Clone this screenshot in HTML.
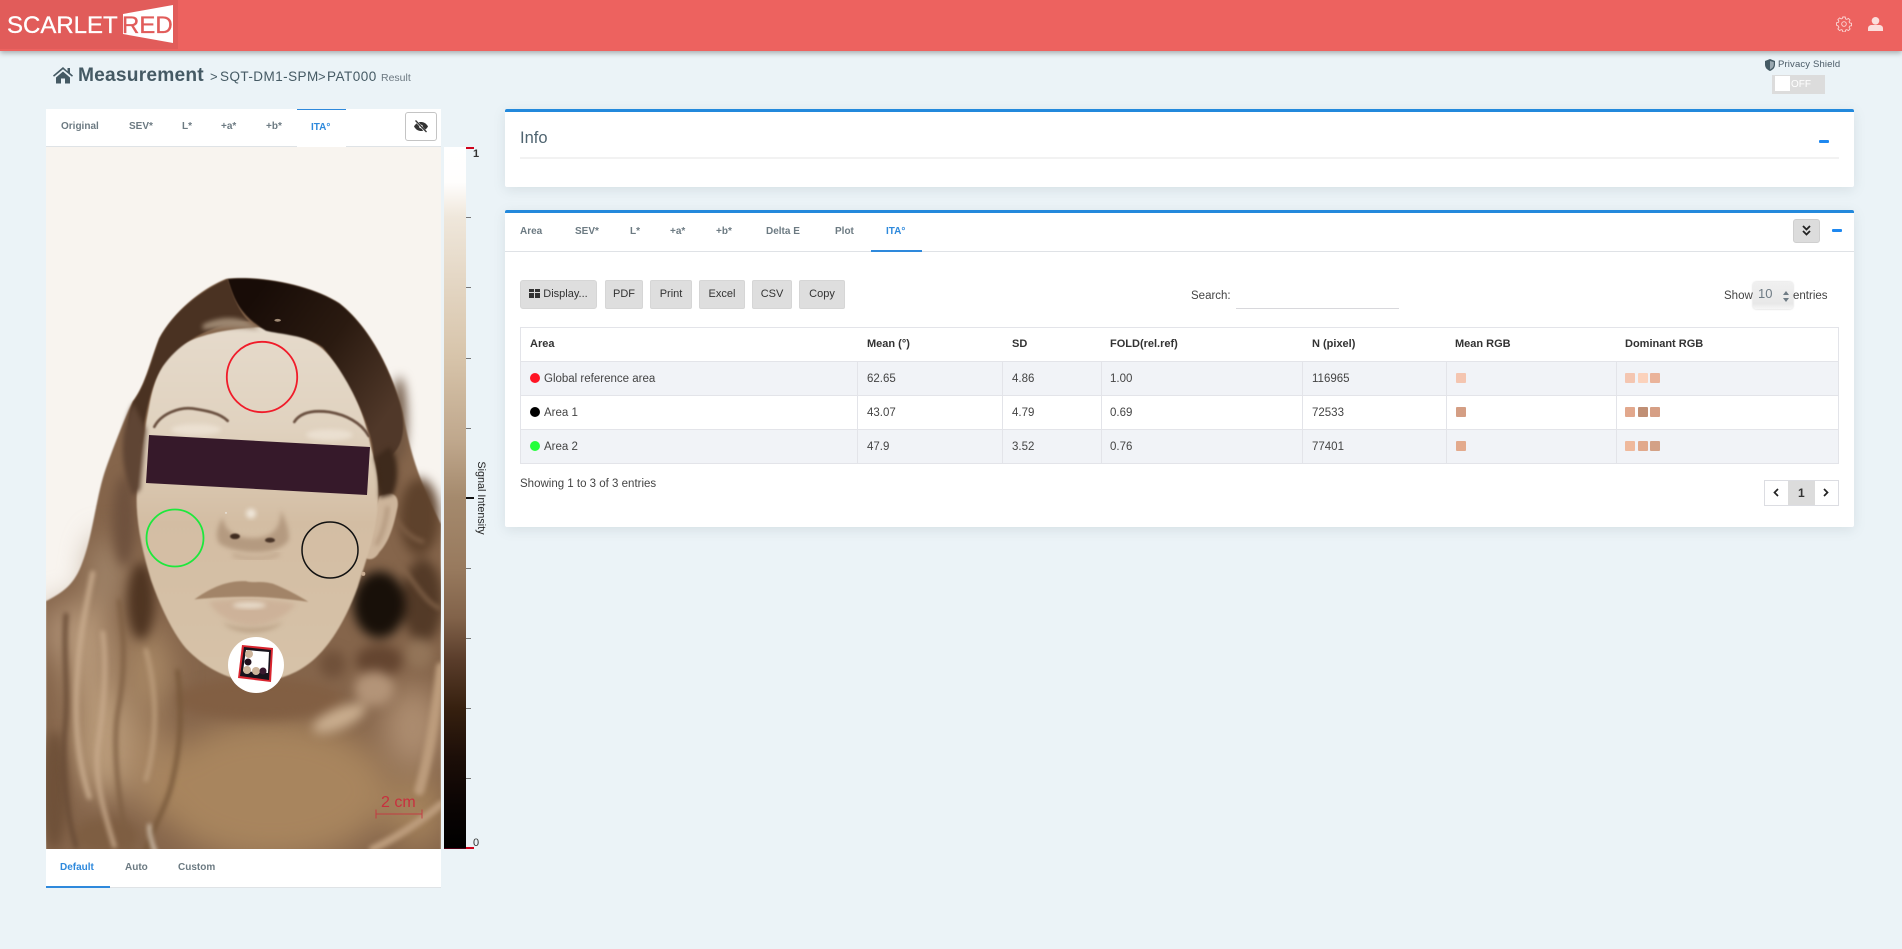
<!DOCTYPE html>
<html lang="en"><head><meta charset="utf-8"><title>Measurement</title>
<style>
html,body{margin:0;padding:0;width:1902px;height:949px;overflow:hidden;background:#ebf3f7;font-family:"Liberation Sans",sans-serif;color:#333}
.a{position:absolute}
.t{position:absolute;white-space:nowrap;height:20px;line-height:20px}
.tab{font-size:10px;font-weight:bold;color:#6c7a82}
.blue{color:#2e89dc}
.btn{position:absolute;top:280px;height:27px;background:#dedede;border:1px solid #d6d6d6;border-radius:2px;font-size:11px;line-height:27px;text-align:center;color:#333;box-sizing:content-box}
.th{font-size:11px;font-weight:bold;color:#333}
.td{font-size:11.5px;color:#444}
.sw{position:absolute;width:10px;height:10px;border-radius:1px}
.dot{position:absolute;width:10px;height:10px;border-radius:50%;left:530px}
.hl{position:absolute;background:#e3e4e9}
.panel{position:absolute;left:505px;width:1349px;background:#fff;box-shadow:0 3px 12px rgba(90,110,120,.14);border-radius:2px;box-sizing:border-box;border-top:3px solid #2389dc}
</style></head><body>

<!-- Header -->
<div class="a" style="left:0;top:0;width:1902px;height:51px;background:#ed625f;box-shadow:0 2px 5px rgba(60,60,60,.4)"></div>
<div class="a" style="left:0;top:0;width:178px;height:49px;background:#e15c5a"></div>
<div class="t" style="left:7px;top:14px;font-size:24px;color:#fff;height:24px;line-height:24px;-webkit-text-stroke:.3px #fff">SCARLET</div>
<svg class="a" style="left:120px;top:3px" width="56" height="42" viewBox="120 3 56 42"><polygon points="123,14 173,5 173,43 123,34" fill="#fff"/></svg>
<div class="t" style="left:122px;top:14px;font-size:24px;color:#e15c5a;height:24px;line-height:24px;-webkit-text-stroke:.3px #e15c5a">RED</div>
<svg class="a" style="left:1836px;top:16px" width="16" height="16" viewBox="0 0 16 16" fill="none" stroke="#fbd7d5" stroke-width=".9"><circle cx="8" cy="8" r="2.300"/><path d="M6.800 1h2.400l.4 1.900 1.200.5 1.600-1 1.700 1.700-1 1.600.5 1.200 1.900.4v2.400l-1.900.4-.5 1.200 1 1.600-1.700 1.700-1.600-1-1.200.5-.4 1.900H6.800l-.4-1.900-1.200-.5-1.600 1-1.700-1.700 1-1.600-.5-1.200L.5 9.200V6.800l1.900-.4.500-1.200-1-1.600 1.700-1.700 1.600 1 1.200-.5z"/></svg>
<svg class="a" style="left:1868px;top:17px" width="15" height="14" viewBox="0 0 15 14" fill="#fbdedc"><circle cx="7.500" cy="3.800" r="3.800"/><path d="M0 14v-2.500C0 9 2 8 3.500 8h8C13 8 15 9 15 11.500V14z"/></svg>

<!-- Breadcrumb -->
<svg class="a" style="left:53px;top:66px" width="20" height="18" viewBox="0 0 20 18" fill="#455a64"><path d="M10 1 0 9.500l1 1.200L10 3.200l9 7.500 1-1.200-3-2.500V2h-2.500v3.300z"/><path d="M3 11.500 10 5.500l7 6V17.500h-5v-5H8v5H3z"/></svg>
<div class="t" style="left:78px;top:65px;font-size:19.200px;letter-spacing:.2px;font-weight:bold;color:#455a64;height:22px;line-height:22px">Measurement</div>
<div class="t" style="left:210px;top:67px;font-size:13px;color:#455a64">&gt;</div>
<div class="t" style="left:220px;top:67px;font-size:13.500px;letter-spacing:.45px;color:#455a64">SQT-DM1-SPM</div>
<div class="t" style="left:318px;top:67px;font-size:13px;color:#455a64">&gt;</div>
<div class="t" style="left:327px;top:67px;font-size:13.500px;letter-spacing:.5px;color:#455a64">PAT000</div>
<div class="t" style="left:381px;top:68px;font-size:10.500px;color:#6b7780">Result</div>

<!-- Privacy -->
<svg class="a" style="left:1765px;top:59px" width="10" height="12" viewBox="0 0 10 12"><path d="M5 0 10 2v3.500C10 9 7.500 11 5 12 2.500 11 0 9 0 5.500V2z" fill="#455a64"/><path d="M5 2v8.500C7 9.500 8.800 8 8.800 5.500V3z" fill="#9aa8b0"/></svg>
<div class="t" style="left:1778px;top:55px;font-size:9.500px;letter-spacing:.15px;color:#4a5a66">Privacy Shield</div>
<div class="a" style="left:1772px;top:75px;width:53px;height:19px;background:#dcdcdc"></div>
<div class="a" style="left:1775px;top:76px;width:15px;height:15px;background:#fff"></div>
<div class="t" style="left:1791px;top:75px;font-size:10px;color:#fff">OFF</div>

<!-- Left tabs -->
<div class="a" style="left:46px;top:109px;width:395px;height:38px;background:#fff;border-bottom:1px solid #dfe3e6;box-sizing:border-box"></div>
<div class="a" style="left:297px;top:109px;width:49px;height:38px;background:#fff;border-top:1px solid #2e89dc;box-sizing:border-box"></div>
<div class="t tab" style="left:61px;top:117px">Original</div>
<div class="t tab" style="left:129px;top:117px">SEV*</div>
<div class="t tab" style="left:182px;top:117px">L*</div>
<div class="t tab" style="left:221px;top:117px">+a*</div>
<div class="t tab" style="left:266px;top:117px">+b*</div>
<div class="t tab blue" style="left:311px;top:118px">ITA°</div>
<div class="a" style="left:405px;top:112px;width:32px;height:29px;border:1px solid #c4c4c4;border-radius:3px;box-sizing:border-box;background:#fff"></div>
<svg class="a" style="left:414px;top:120px" width="14" height="13" viewBox="0 0 14 13"><path d="M0 6.500C2 3 4.500 2 7 2s5 1 7 4.500C12 10 9.500 11 7 11S2 10 0 6.500z" fill="#333"/><circle cx="7" cy="6.500" r="1.800" fill="#fff"/><path d="M2 1l10 11" stroke="#fff" stroke-width="2.200"/><path d="M1.500 0.500l11 11.500" stroke="#333" stroke-width="1.300"/></svg>

<!-- Photo -->
<svg class="a" style="left:46px;top:147px" width="395" height="702" viewBox="46 147 395 702">
<defs>
<filter id="b2" x="-20%" y="-20%" width="140%" height="140%" color-interpolation-filters="sRGB"><feGaussianBlur stdDeviation="2.500"/></filter>
<filter id="b6" x="-30%" y="-30%" width="160%" height="160%" color-interpolation-filters="sRGB"><feGaussianBlur stdDeviation="7"/></filter>
<filter id="b12" x="-40%" y="-40%" width="180%" height="180%" color-interpolation-filters="sRGB"><feGaussianBlur stdDeviation="16"/></filter>
<filter id="b28" x="-60%" y="-60%" width="220%" height="220%" color-interpolation-filters="sRGB"><feGaussianBlur stdDeviation="45"/></filter>
<linearGradient id="face" x1="0" y1="0" x2="0" y2="1"><stop offset="0" stop-color="#e5dacb"/><stop offset=".28" stop-color="#e0d2bf"/><stop offset=".55" stop-color="#d3bda3"/><stop offset="1" stop-color="#d6c2a8"/></linearGradient>
<linearGradient id="hairT" gradientUnits="userSpaceOnUse" x1="620" y1="0" x2="1030" y2="320"><stop offset="0" stop-color="#180c07"/><stop offset=".5" stop-color="#2a1a10"/><stop offset="1" stop-color="#503829"/></linearGradient>
<clipPath id="cl"><rect x="46" y="147" width="395" height="702"/></clipPath>
</defs>
<g clip-path="url(#cl)">
<rect x="46" y="147" width="395" height="702" fill="#f8f4ef"/>
<g transform="translate(46,300) scale(.33333,.35014)">
<!-- shoulder + silhouette -->
<path filter="url(#b2)" fill="#85654b" d="M540 -60C650 -70 800 -40 880 10C960 70 1030 180 1070 320C1090 420 1110 500 1185 640V1580H0V860C40 840 80 820 105 760C140 680 150 560 180 480C210 400 240 330 260 290C300 240 310 180 340 110C380 40 460 -30 540 -60Z"/>
<!-- colour zones -->
<g filter="url(#b28)">
<ellipse cx="180" cy="780" rx="45" ry="100" fill="#a68b70"/>
<ellipse cx="50" cy="950" rx="60" ry="80" fill="#ab8d73"/>
<ellipse cx="130" cy="1020" rx="70" ry="170" fill="#b69879"/>
<ellipse cx="175" cy="1260" rx="90" ry="160" fill="#b99b7a"/>
<ellipse cx="310" cy="1060" rx="65" ry="120" fill="#a98966"/>
<ellipse cx="310" cy="1330" rx="70" ry="140" fill="#a48361"/>
<ellipse cx="680" cy="1400" rx="350" ry="200" fill="#a8855e"/>
<ellipse cx="1100" cy="1220" rx="90" ry="120" fill="#ad8d70"/>
<ellipse cx="1110" cy="1460" rx="85" ry="100" fill="#a5835c"/>
</g>
<g filter="url(#b12)">
<ellipse cx="640" cy="1140" rx="250" ry="60" fill="#825f43"/>
<ellipse cx="25" cy="1400" rx="40" ry="170" fill="#6f5139"/>
<ellipse cx="180" cy="1530" rx="100" ry="50" fill="#7e5e42"/>
<ellipse cx="1120" cy="620" rx="60" ry="110" fill="#5e422c"/>
<ellipse cx="1130" cy="860" rx="60" ry="120" fill="#533a27"/>
<ellipse cx="1060" cy="340" rx="22" ry="120" fill="#6d5440"/>
<ellipse cx="235" cy="630" rx="35" ry="130" fill="#6f523e"/>
<ellipse cx="285" cy="860" rx="40" ry="110" fill="#4f3522"/>
<ellipse cx="1000" cy="870" rx="78" ry="95" fill="#181009"/>
<ellipse cx="1010" cy="490" rx="35" ry="70" fill="#3a2616"/>
<ellipse cx="1000" cy="1030" rx="70" ry="45" fill="#644530"/>
<ellipse cx="985" cy="1110" rx="60" ry="50" fill="#b39478"/>
<ellipse cx="1120" cy="1010" rx="40" ry="45" fill="#937559"/>
<ellipse cx="880" cy="1195" rx="85" ry="30" fill="#c9ad8e" transform="rotate(-22 880 1195)"/>
<ellipse cx="860" cy="1040" rx="40" ry="40" fill="#70513a"/>
</g>
<!-- strands -->
<g filter="url(#b6)" fill="none" stroke-linecap="round">
<path d="M140 780C120 880 100 960 95 1060C85 1180 90 1300 130 1420" stroke="#c8ab8d" stroke-width="14"/>
<path d="M220 860C235 960 240 1060 215 1180C200 1280 215 1400 245 1568" stroke="#7e5f43" stroke-width="12"/>
<path d="M170 950C185 1060 170 1180 155 1280C145 1380 180 1480 205 1560" stroke="#c8aa8c" stroke-width="12"/>
<path d="M60 900C50 1020 70 1120 55 1240C45 1340 60 1460 90 1560" stroke="#6a4d37" stroke-width="14"/>
<path d="M395 1060C410 1170 405 1270 380 1370C365 1440 320 1510 300 1568" stroke="#765739" stroke-width="12"/>
<path d="M300 1000C335 1130 335 1250 300 1370" stroke="#bd9e7d" stroke-width="12"/>
<path d="M310 1500C310 1530 320 1560 330 1580" stroke="#f0e6d6" stroke-width="8"/>
<path d="M1185 1050C1170 1180 1150 1300 1120 1400" stroke="#bc9c7c" stroke-width="30"/>
<path d="M1185 1440C1110 1500 1040 1540 980 1568" stroke="#bc9c7c" stroke-width="22"/>
<path d="M1010 570C1050 640 1090 680 1130 690" stroke="#7d5e45" stroke-width="12"/>
<path d="M1060 760C1100 790 1130 860 1180 880" stroke="#84654b" stroke-width="10"/>
</g>
<!-- ear -->
<path filter="url(#b2)" d="M1000 560C1030 545 1060 550 1055 590C1045 640 1030 690 1000 720C985 745 965 745 950 730Z" fill="#cdb59b"/>
<path filter="url(#b6)" d="M1025 590C1020 630 1010 670 990 700" stroke="#a88c72" stroke-width="8" fill="none"/>
<!-- face -->
<path filter="url(#b2)" fill="url(#face)" d="M640 78C700 80 780 100 830 140C900 200 950 300 975 420C990 470 998 510 997 560C995 650 965 730 935 820C905 900 860 980 800 1030C750 1070 690 1090 620 1090C540 1085 470 1045 420 995C380 950 345 880 315 800C290 720 270 640 272 560C275 470 295 380 310 300C325 220 345 175 400 130C470 95 560 80 640 78Z"/>
<!-- hair top right (dark) -->
<path filter="url(#b2)" fill="url(#hairT)" d="M545 -60C650 -70 800 -40 880 10C960 70 1020 170 1060 290C1085 370 1065 420 1040 440C1010 470 990 470 985 450C975 350 900 210 830 135C780 100 700 98 660 88C610 60 565 20 545 -60Z"/>
<!-- hair top left -->
<path filter="url(#b2)" fill="#4a3222" d="M545 -60C470 -30 385 30 340 110C315 175 300 240 262 290C240 340 240 420 285 410C298 330 312 245 350 190C395 130 450 100 520 75C560 62 590 60 610 62C575 30 560 -20 545 -60Z"/>
<path filter="url(#b6)" fill="#9c8670" d="M470 70C510 50 560 45 600 60L640 85C580 75 520 80 470 85Z"/>
<path filter="url(#b6)" fill="#5f4534" d="M262 295C225 360 215 460 260 560L282 540L300 370Z"/>
<path filter="url(#b6)" fill="#3e2a1c" d="M985 450C1000 490 1003 530 1000 565L1040 555C1060 500 1050 440 1030 420Z"/>
<ellipse cx="695" cy="58" rx="10" ry="4" fill="#a08a74"/>
<!-- eyebrows -->
<g fill="none" stroke="#6a5040" filter="url(#b2)" stroke-linecap="round">
<path d="M325 362C345 325 400 305 440 310C480 316 520 322 545 345" stroke-width="8"/>
<path d="M745 348C765 318 810 315 850 320C900 328 945 350 968 388" stroke-width="8"/>
</g>
<!-- lids -->
<ellipse filter="url(#b6)" cx="450" cy="370" rx="75" ry="16" fill="#ebe0d1"/>
<ellipse filter="url(#b6)" cx="850" cy="385" rx="70" ry="16" fill="#eadfd0"/>
<!-- nose -->
<path filter="url(#b6)" d="M530 620C515 650 505 670 520 695C545 712 590 720 630 720C670 720 710 712 728 685C732 655 715 625 705 600C705 650 680 680 620 680C570 680 535 660 530 620Z" fill="#b49a80"/>
<path filter="url(#b6)" d="M560 728C600 742 660 742 700 725" stroke="#c2a98f" stroke-width="12" fill="none"/>
<ellipse filter="url(#b6)" cx="615" cy="610" rx="15" ry="14" fill="#efe6d9"/>
<ellipse filter="url(#b2)" cx="567" cy="675" rx="15" ry="8" fill="#3f2c20"/>
<ellipse filter="url(#b2)" cx="672" cy="686" rx="15" ry="7" fill="#4a3528"/>
<circle cx="540" cy="608" r="3" fill="#e6e0d6"/>
<!-- lips -->
<path filter="url(#b2)" d="M445 855C490 825 540 800 600 803C620 810 640 800 680 810C720 825 760 845 787 862C730 855 660 848 610 848C550 848 500 850 445 855Z" fill="#a28468"/>
<path filter="url(#b6)" d="M490 862C560 850 680 852 750 868C720 905 670 928 620 930C560 928 510 900 490 862Z" fill="#cdb299"/>
<ellipse filter="url(#b6)" cx="610" cy="872" rx="50" ry="9" fill="#e8dccb"/>
<path filter="url(#b6)" d="M530 922C580 942 660 942 710 920C680 955 570 960 530 922Z" fill="#b89e83"/>
<!-- earring dots -->
<circle cx="952" cy="782" r="6" fill="#c9ad92"/>
</g>
<!-- cover bar -->
<polygon points="149,435 370,447 367,495 146,483" fill="#36192a"/>
<!-- circles -->
<circle cx="262" cy="377" r="35.200" fill="none" stroke="#f01c2a" stroke-width="1.800"/>
<circle cx="175" cy="538" r="28.500" fill="none" stroke="#1de83c" stroke-width="1.800"/>
<circle cx="330" cy="550" r="28" fill="none" stroke="#111" stroke-width="1.500"/>
<!-- marker -->
<circle cx="256" cy="665" r="28" fill="#fff"/>
<polygon points="242,645 273,648 271,682 238,678" fill="#d9252f"/>
<polygon points="244,647 271,650 269,680 240,676" fill="#17131c"/>
<polygon points="246,650 269,652 268,673 243,671" fill="#fff"/>
<circle cx="249" cy="654" r="4" fill="#cdb59b"/><circle cx="247" cy="670" r="4" fill="#cdb59b"/><circle cx="256" cy="671" r="4" fill="#cdb59b"/>
<circle cx="248" cy="662" r="3.500" fill="#20101c"/><circle cx="263" cy="671" r="3.500" fill="#38182e"/>
<!-- scale -->
<text x="381" y="807" font-size="16" font-family="Liberation Sans" fill="#c8303e">2 cm</text>
<path d="M376 814H422M376 809.500v9M422 809.500v9" stroke="#c8303e" stroke-width="1" fill="none" opacity=".85"/>
</g>
</svg>

<!-- Colorbar -->
<div class="a" style="left:444px;top:147px;width:22px;height:702px;background:linear-gradient(to bottom,#fff 0,#fffefd 5%,#efe7db 10%,#e3d5c2 20%,#d7c4aa 30%,#bfa78c 42%,#a58a6d 50%,#987a5e 60%,#82634a 67%,#5a3d2b 73%,#36200f 80%,#1c0e08 87%,#0a0403 94%,#000 100%)"></div>
<div class="a" style="left:466px;top:147px;width:8px;height:2px;background:#d0021b"></div>
<div class="a" style="left:466px;top:847px;width:8px;height:2px;background:#d0021b"></div>
<div class="a" style="left:444px;top:848px;width:22px;height:1px;background:#4a0012"></div>
<div class="a" style="left:466px;top:217px;width:5px;height:1px;background:#777"></div>
<div class="a" style="left:466px;top:287px;width:5px;height:1px;background:#777"></div>
<div class="a" style="left:466px;top:358px;width:5px;height:1px;background:#777"></div>
<div class="a" style="left:466px;top:428px;width:5px;height:1px;background:#777"></div>
<div class="a" style="left:466px;top:497px;width:8px;height:2px;background:#111"></div>
<div class="a" style="left:466px;top:568px;width:5px;height:1px;background:#777"></div>
<div class="a" style="left:466px;top:638px;width:5px;height:1px;background:#777"></div>
<div class="a" style="left:466px;top:708px;width:5px;height:1px;background:#777"></div>
<div class="a" style="left:466px;top:778px;width:5px;height:1px;background:#777"></div>
<div class="t" style="left:473px;top:144px;font-size:11px;font-weight:bold;color:#333">1</div>
<div class="t" style="left:473px;top:833px;font-size:11px;color:#333">0</div>
<div class="t" style="left:443px;top:488px;width:76px;text-align:center;font-size:10.800px;color:#222;transform:rotate(90deg)">Signal Intensity</div>

<!-- Bottom tabs -->
<div class="a" style="left:46px;top:849px;width:395px;height:39px;background:#fff;border-bottom:1px solid #dfe3e6;box-sizing:border-box"></div>
<div class="a" style="left:46px;top:886px;width:64px;height:2px;background:#2e89dc"></div>
<div class="t tab blue" style="left:60px;top:858px">Default</div>
<div class="t tab" style="left:125px;top:858px">Auto</div>
<div class="t tab" style="left:178px;top:858px">Custom</div>

<!-- Info panel -->
<div class="panel" style="top:109px;height:78px"></div>
<div class="t" style="left:520px;top:128px;font-size:16.500px;color:#4f6470">Info</div>
<div class="a" style="left:520px;top:157px;width:1319px;height:2px;background:#f2f2f2"></div>
<div class="a" style="left:1819px;top:140px;width:10px;height:3px;background:#1e88f0;border-radius:1px"></div>

<!-- Main panel -->
<div class="panel" style="top:210px;height:317px"></div>
<div class="a" style="left:505px;top:251px;width:1349px;height:1px;background:#dfe2e6"></div>
<div class="a" style="left:871px;top:250px;width:51px;height:2px;background:#2e89dc"></div>
<div class="t tab" style="left:520px;top:222px">Area</div>
<div class="t tab" style="left:575px;top:222px">SEV*</div>
<div class="t tab" style="left:630px;top:222px">L*</div>
<div class="t tab" style="left:670px;top:222px">+a*</div>
<div class="t tab" style="left:716px;top:222px">+b*</div>
<div class="t tab" style="left:766px;top:222px">Delta E</div>
<div class="t tab" style="left:835px;top:222px">Plot</div>
<div class="t tab blue" style="left:886px;top:222px">ITA°</div>
<div class="a" style="left:1793px;top:219px;width:27px;height:24px;background:#dcdcdc;border:1px solid #cfcfcf;border-radius:3px;box-sizing:border-box"></div>
<svg class="a" style="left:1802px;top:225px" width="9" height="11" viewBox="0 0 9 11" fill="none" stroke="#222" stroke-width="1.800"><path d="M1 1l3.500 3.500L8 1M1 6l3.500 3.500L8 6"/></svg>
<div class="a" style="left:1832px;top:229px;width:10px;height:3px;background:#1e88f0;border-radius:1px"></div>

<!-- Buttons -->
<div class="btn" style="left:520px;width:75px;border-radius:3px"><span style="display:inline-block;width:11px;height:9px;background:#333;vertical-align:-1px;margin-right:3px;background-image:linear-gradient(#dedede,#dedede),linear-gradient(#dedede,#dedede);background-size:11px 1px,1px 9px;background-position:0 3px,5px 0;background-repeat:no-repeat"></span>Display...</div>
<div class="btn" style="left:605px;width:36px">PDF</div>
<div class="btn" style="left:650px;width:40px">Print</div>
<div class="btn" style="left:699px;width:44px">Excel</div>
<div class="btn" style="left:752px;width:38px">CSV</div>
<div class="btn" style="left:799px;width:44px">Copy</div>

<div class="t" style="left:1191px;top:286px;font-size:11.500px;color:#444">Search:</div>
<div class="a" style="left:1236px;top:308px;width:163px;height:1px;background:#d8d8dc"></div>
<div class="t" style="left:1724px;top:286px;font-size:11.500px;color:#444">Show</div>
<div class="a" style="left:1753px;top:282px;width:40px;height:27px;background:linear-gradient(#f0f0f0,#e8e8e8 80%,#f6f6f6);border-radius:3px;box-shadow:0 0 2px rgba(0,0,0,.2)"></div>
<div class="t" style="left:1758px;top:284px;font-size:13px;color:#6f7c85">10</div>
<svg class="a" style="left:1783px;top:291px" width="6" height="11" viewBox="0 0 6 11" fill="#6f7c85"><path d="M3 0l3 4H0zM3 11l3-4H0z"/></svg>
<div class="t" style="left:1793px;top:286px;font-size:11.500px;color:#444">entries</div>

<!-- Table -->
<div class="a" style="left:520px;top:362px;width:1319px;height:34px;background:#f1f3f7"></div>
<div class="a" style="left:520px;top:430px;width:1319px;height:34px;background:#f1f3f7"></div>
<div class="hl" style="left:520px;top:327px;width:1319px;height:1px"></div>
<div class="hl" style="left:520px;top:361px;width:1319px;height:1px"></div>
<div class="hl" style="left:520px;top:395px;width:1319px;height:1px"></div>
<div class="hl" style="left:520px;top:429px;width:1319px;height:1px"></div>
<div class="hl" style="left:520px;top:463px;width:1319px;height:1px"></div>
<div class="hl" style="left:520px;top:327px;width:1px;height:137px"></div>
<div class="hl" style="left:1838px;top:327px;width:1px;height:137px"></div>
<div class="hl" style="left:857px;top:362px;width:1px;height:102px"></div>
<div class="hl" style="left:1002px;top:362px;width:1px;height:102px"></div>
<div class="hl" style="left:1101px;top:362px;width:1px;height:102px"></div>
<div class="hl" style="left:1302px;top:362px;width:1px;height:102px"></div>
<div class="hl" style="left:1446px;top:362px;width:1px;height:102px"></div>
<div class="hl" style="left:1616px;top:362px;width:1px;height:102px"></div>

<div class="t th" style="left:530px;top:334px">Area</div>
<div class="t th" style="left:867px;top:334px">Mean (°)</div>
<div class="t th" style="left:1012px;top:334px">SD</div>
<div class="t th" style="left:1110px;top:334px">FOLD(rel.ref)</div>
<div class="t th" style="left:1312px;top:334px">N (pixel)</div>
<div class="t th" style="left:1455px;top:334px">Mean RGB</div>
<div class="t th" style="left:1625px;top:334px">Dominant RGB</div>

<div class="dot" style="top:373px;background:#ff1424"></div>
<div class="t td" style="left:544px;top:369px">Global reference area</div>
<div class="t td" style="left:867px;top:369px">62.65</div>
<div class="t td" style="left:1012px;top:369px">4.86</div>
<div class="t td" style="left:1110px;top:369px">1.00</div>
<div class="t td" style="left:1312px;top:369px">116965</div>
<div class="sw" style="left:1456px;top:373px;background:#f4c5b0"></div>
<div class="sw" style="left:1625px;top:373px;background:#f4c6b1"></div>
<div class="sw" style="left:1638px;top:373px;background:#fbd2bc"></div>
<div class="sw" style="left:1650px;top:373px;background:#eab39a"></div>

<div class="dot" style="top:407px;background:#000"></div>
<div class="t td" style="left:544px;top:403px">Area 1</div>
<div class="t td" style="left:867px;top:403px">43.07</div>
<div class="t td" style="left:1012px;top:403px">4.79</div>
<div class="t td" style="left:1110px;top:403px">0.69</div>
<div class="t td" style="left:1312px;top:403px">72533</div>
<div class="sw" style="left:1456px;top:407px;background:#d49e84"></div>
<div class="sw" style="left:1625px;top:407px;background:#e2a88d"></div>
<div class="sw" style="left:1638px;top:407px;background:#c08f75"></div>
<div class="sw" style="left:1650px;top:407px;background:#d69f85"></div>

<div class="dot" style="top:441px;background:#22ff3a"></div>
<div class="t td" style="left:544px;top:437px">Area 2</div>
<div class="t td" style="left:867px;top:437px">47.9</div>
<div class="t td" style="left:1012px;top:437px">3.52</div>
<div class="t td" style="left:1110px;top:437px">0.76</div>
<div class="t td" style="left:1312px;top:437px">77401</div>
<div class="sw" style="left:1456px;top:441px;background:#e3aa8d"></div>
<div class="sw" style="left:1625px;top:441px;background:#efb99c"></div>
<div class="sw" style="left:1638px;top:441px;background:#e1a98c"></div>
<div class="sw" style="left:1650px;top:441px;background:#d3a186"></div>

<div class="t" style="left:520px;top:474px;font-size:11.500px;color:#444">Showing 1 to 3 of 3 entries</div>

<!-- Pagination -->
<div class="a" style="left:1764px;top:480px;width:75px;height:26px;border:1px solid #dcdde2;box-sizing:border-box;background:#fff"></div>
<div class="a" style="left:1788px;top:481px;width:27px;height:24px;background:#dcdcdc"></div>
<div class="t" style="left:1798px;top:483px;font-size:12px;font-weight:bold;color:#333">1</div>
<svg class="a" style="left:1773px;top:488px" width="6" height="9" viewBox="0 0 6 9" fill="none" stroke="#222" stroke-width="1.700"><path d="M5 1 1.500 4.500 5 8"/></svg>
<svg class="a" style="left:1823px;top:488px" width="6" height="9" viewBox="0 0 6 9" fill="none" stroke="#222" stroke-width="1.700"><path d="M1 1l3.500 3.500L1 8"/></svg>

</body></html>
